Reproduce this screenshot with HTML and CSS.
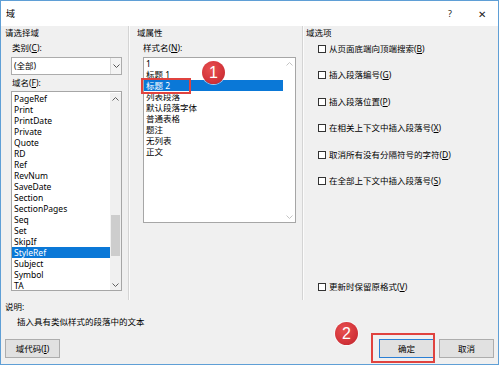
FILE: index.html
```html
<!DOCTYPE html>
<html lang="zh-CN">
<head>
<meta charset="utf-8">
<title>域</title>
<link rel="stylesheet" href="styles.css">
</head>
<body>
<div class="win">
  <div class="titlebar">
    <span class="title">域</span>
    <span class="tb-btns"><span class="tb-btn">?</span><span class="tb-btn close">✕</span></span>
  </div>
  <div class="cols">
    <div class="col col-left">
      <div class="grp">请选择域</div>
      <div class="lbl">类别(<u>C</u>):</div>
      <div class="select">
        <span class="sel-text">(全部)</span>
        <span class="sel-btn"><svg width="7" height="4" viewBox="0 0 7 4"><path d="M0.5 0.5 L3.5 3.5 L6.5 0.5" fill="none" stroke="#555" stroke-width="1"/></svg></span>
      </div>
      <div class="lbl lbl2">域名(<u>F</u>):</div>
      <div class="list list-left">
        <div class="items">
          <div class="item">PageRef</div>
          <div class="item">Print</div>
          <div class="item">PrintDate</div>
          <div class="item">Private</div>
          <div class="item">Quote</div>
          <div class="item">RD</div>
          <div class="item">Ref</div>
          <div class="item">RevNum</div>
          <div class="item">SaveDate</div>
          <div class="item">Section</div>
          <div class="item">SectionPages</div>
          <div class="item">Seq</div>
          <div class="item">Set</div>
          <div class="item">SkipIf</div>
          <div class="item sel">StyleRef</div>
          <div class="item">Subject</div>
          <div class="item">Symbol</div>
          <div class="item">TA</div>
        </div>
        <div class="sb">
          <span class="arrow"><svg width="7" height="4" viewBox="0 0 7 4"><path d="M0.5 3.5 L3.5 0.5 L6.5 3.5" fill="none" stroke="#606060" stroke-width="1"/></svg></span>
          <span class="track"><span class="thumb"></span></span>
          <span class="arrow"><svg width="7" height="4" viewBox="0 0 7 4"><path d="M0.5 0.5 L3.5 3.5 L6.5 0.5" fill="none" stroke="#606060" stroke-width="1"/></svg></span>
        </div>
      </div>
    </div>
    <div class="sep"></div>
    <div class="col col-mid">
      <div class="grp">域属性</div>
      <div class="lbl">样式名(<u>N</u>):</div>
      <div class="list list-mid">
        <div class="items">
          <div class="item">1</div>
          <div class="item">标题 1</div>
          <div class="item sel">标题 2</div>
          <div class="item">列表段落</div>
          <div class="item">默认段落字体</div>
          <div class="item">普通表格</div>
          <div class="item">题注</div>
          <div class="item">无列表</div>
          <div class="item">正文</div>
        </div>
        <div class="sb sb-off">
          <span class="arrow"><svg width="7" height="4" viewBox="0 0 7 4"><path d="M0.5 3.5 L3.5 0.5 L6.5 3.5" fill="none" stroke="#c4c4c4" stroke-width="1"/></svg></span>
          <span class="track"></span>
          <span class="arrow"><svg width="7" height="4" viewBox="0 0 7 4"><path d="M0.5 0.5 L3.5 3.5 L6.5 0.5" fill="none" stroke="#c4c4c4" stroke-width="1"/></svg></span>
        </div>
      </div>
    </div>
    <div class="sep"></div>
    <div class="col col-right">
      <div class="grp">域选项</div>
      <div class="chk"><span class="box"></span>从页面底端向顶端搜索(<u>B</u>)</div>
      <div class="chk"><span class="box"></span>插入段落编号(<u>G</u>)</div>
      <div class="chk"><span class="box"></span>插入段落位置(<u>P</u>)</div>
      <div class="chk"><span class="box"></span>在相关上下文中插入段落号(<u>X</u>)</div>
      <div class="chk"><span class="box"></span>取消所有没有分隔符号的字符(<u>D</u>)</div>
      <div class="chk"><span class="box"></span>在全部上下文中插入段落号(<u>S</u>)</div>
      <div class="chk chk-last"><span class="box"></span>更新时保留原格式(<u>V</u>)</div>
    </div>
  </div>
  <div class="desc">
    <div class="desc-lbl">说明:</div>
    <div class="desc-text">插入具有类似样式的段落中的文本</div>
  </div>
  <div class="btnrow">
    <span class="btn">域代码(<u>I</u>)</span>
    <span class="spacer"></span>
    <span class="btn btn-default">确定</span>
    <span class="btn">取消</span>
  </div>

  <div class="mark-box mark-box1"></div>
  <div class="mark-circle mark-c1">1</div>
  <div class="mark-box mark-box2"></div>
  <div class="mark-circle mark-c2">2</div>
</div>
</body>
</html>
```

FILE: styles.css
```css
* { box-sizing: border-box; }
html, body { margin: 0; padding: 0; }
body {
  width: 499px;
  height: 365px;
  overflow: hidden;
  background: #fff;
  font-family: "Noto Sans", "Noto Sans CJK SC", sans-serif;
  font-size: 8.5px;
  color: #000;
}
u { text-decoration: underline; text-underline-offset: 1px; }

.win {
  position: relative;
  width: 499px;
  height: 365px;
  border: 1px solid #5f9fd6;
  background: #f0f0f0;
  display: flex;
  flex-direction: column;
}

.titlebar {
  flex: none;
  height: 25px;
  background: #fff;
  display: flex;
  align-items: center;
  justify-content: space-between;
  padding-left: 5px;
}
.title { font-size: 9px; line-height: 12px; }
.tb-btns { display: flex; align-self: stretch; }
.tb-btn {
  width: 32px;
  display: flex;
  align-items: center;
  justify-content: center;
  font-size: 9px;
  color: #222;
}
.tb-btn.close { font-size: 10px; }

.cols {
  flex: none;
  height: 274px;
  display: flex;
}
.col { display: flex; flex-direction: column; padding-top: 1px; }
.col-left { width: 127px; padding-left: 4px; }
.col-mid { width: 172px; padding-left: 7px; }
.col-right { flex: 1; padding-left: 2px; padding-bottom: 7px; }
.sep { width: 2px; border-left: 1px solid #d4d4d4; border-right: 1px solid #fbfbfb; }

.grp { height: 12px; line-height: 12px; }
.lbl { height: 12px; line-height: 12px; margin-top: 3px; margin-left: 7px; }
.col-mid .lbl { margin-left: 6px; }
.lbl2 { margin-top: 2px; }

.select {
  margin-top: 3px;
  margin-left: 6px;
  width: 111px;
  height: 18px;
  background: #fff;
  border: 1px solid #acacac;
  display: flex;
}
.sel-text { flex: 1; line-height: 16px; padding-left: 2px; }
.sel-btn {
  width: 11px;
  border-left: 1px solid #d9d9d9;
  background: #f4f4f4;
  display: flex;
  align-items: center;
  justify-content: center;
}

.list {
  background: #fff;
  border: 1px solid #a6a6a6;
  display: flex;
  overflow: hidden;
}
.list-left {
  margin-top: 2px;
  margin-left: 6px;
  width: 111px;
  height: 200px;
  padding-top: 1px;
}
.list-mid {
  margin-top: 3px;
  margin-left: 6px;
  width: 153px;
  height: 166px;
}
.items { flex: 1; display: flex; flex-direction: column; }
.item { height: 11px; line-height: 11px; padding-left: 2px; white-space: nowrap; }
.item.sel { background: #0a78d7; color: #fff; }

.sb { width: 11px; display: flex; flex-direction: column; background: #f0f0f0; }
.list-mid .sb { width: 12px; background: #fff; }
.arrow { height: 11px; display: flex; align-items: center; justify-content: center; flex: none; }
.track { flex: 1; padding-top: 111px; }
.thumb { display: block; height: 41px; margin: 0 1px; background: #cdcdcd; }

.chk {
  height: 12px;
  line-height: 12px;
  margin-top: 14.4px;
  padding-left: 12px;
  display: flex;
  align-items: center;
  white-space: nowrap;
}
.col-right .grp + .chk { margin-top: 4px; }
.chk-last { margin-top: auto; }
.box {
  width: 8px;
  height: 8px;
  border: 1px solid #333;
  background: #fff;
  margin-right: 3px;
  flex: none;
}

.desc { flex: none; padding-left: 4px; padding-top: 1px; }
.desc-lbl { height: 12px; line-height: 12px; }
.desc-text { height: 12px; line-height: 12px; margin-top: 3px; padding-left: 12px; }

.btnrow {
  flex: none;
  display: flex;
  margin-top: 11px;
  padding: 0 4px 0 4px;
  height: 19px;
}
.spacer { flex: 1; }
.btn {
  width: 55px;
  height: 19px;
  background: #e1e1e1;
  border: 1px solid #adadad;
  display: flex;
  align-items: center;
  justify-content: center;
  line-height: 12px;
}
.btn-default { border-color: #2a7fd4; margin-right: 5px; }

.mark-box { position: absolute; border: 2px solid #e0433f; }
.mark-box1 { left: 140px; top: 77px; width: 50px; height: 16px; }
.mark-box2 { left: 370px; top: 332px; width: 64px; height: 30px; }
.mark-circle {
  position: absolute;
  width: 23px;
  height: 23px;
  border-radius: 50%;
  background: radial-gradient(circle at 40% 35%, #e85050 0%, #d3343a 60%, #b8262c 100%);
  color: #fff;
  font-family: "Liberation Sans", Arial, sans-serif;
  font-size: 16px;
  line-height: 23px;
  text-align: center;
  box-shadow: 0 0 0 1px rgba(255,255,255,0.6);
}
.mark-c1 { left: 201px; top: 60px; }
.mark-c2 { left: 334px; top: 321px; }
```
